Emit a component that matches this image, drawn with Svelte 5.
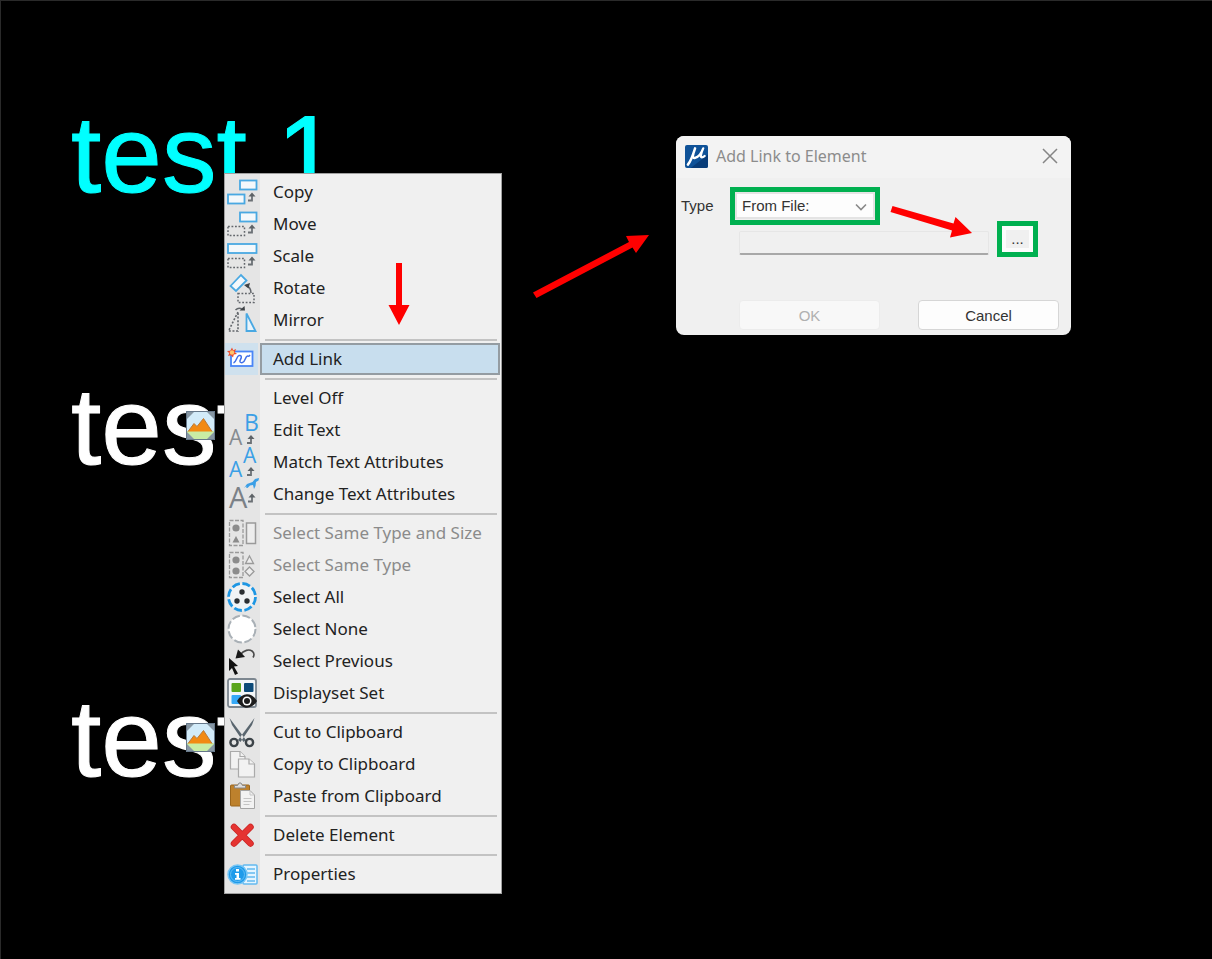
<!-- Drawing view with the element context menu and the link dialog. -->

<script>
	let linkType = 'file';
	let path = '';

	const notes = [
		{ text: 'test 1', cls: 'first' },
		{ text: 'test', cls: 'second', linked: true },
		{ text: 'test', cls: 'third', linked: true }
	];

	const groups = [
		[
			{ icon: 'copy', label: 'Copy' },
			{ icon: 'move', label: 'Move' },
			{ icon: 'scale', label: 'Scale' },
			{ icon: 'rotate', label: 'Rotate' },
			{ icon: 'mirror', label: 'Mirror' }
		],
		[{ icon: 'link', label: 'Add Link', active: true }],
		[
			{ icon: '', label: 'Level Off' },
			{ icon: 'edit', label: 'Edit Text' },
			{ icon: 'match', label: 'Match Text Attributes' },
			{ icon: 'change', label: 'Change Text Attributes' }
		],
		[
			{ icon: 'samesize', label: 'Select Same Type and Size', disabled: true },
			{ icon: 'sametype', label: 'Select Same Type', disabled: true },
			{ icon: 'all', label: 'Select All' },
			{ icon: 'none', label: 'Select None' },
			{ icon: 'previous', label: 'Select Previous' },
			{ icon: 'display', label: 'Displayset Set' }
		],
		[
			{ icon: 'cut', label: 'Cut to Clipboard' },
			{ icon: 'pages', label: 'Copy to Clipboard' },
			{ icon: 'paste', label: 'Paste from Clipboard' }
		],
		[{ icon: 'delete', label: 'Delete Element' }],
		[{ icon: 'props', label: 'Properties' }]
	];
</script>

{#snippet turn(x, y)}
	<path d="M{x} {y}h4v-5" fill="none" stroke="#6b7075" stroke-width="1.8" />
	<path d="M{x + 0.5} {y - 4}l3.5-4 3.5 4z" fill="#5d6266" />
{/snippet}

{#snippet icon(name)}
	<svg class="icon" viewBox="0 0 32 32" aria-hidden="true">
		{#if name === 'copy'}
			<g fill="#f4f8fb" stroke="#49a8e2" stroke-width="1.8">
				<rect x="14" y="4.5" width="16.5" height="9" />
				<rect x="2" y="18.5" width="16.5" height="9" />
			</g>
			{@render turn(22, 24.5)}
		{:else if name === 'move'}
			<rect x="14" y="4.5" width="16.5" height="9" fill="#f4f8fb" stroke="#49a8e2" stroke-width="1.8" />
			<rect x="2" y="18.5" width="16.5" height="9" fill="none" stroke="#62666b" stroke-width="1.5" stroke-dasharray="1.8 1.7" />
			{@render turn(22, 24.5)}
		{:else if name === 'scale'}
			<rect x="2" y="4" width="28.5" height="9" fill="#f4f8fb" stroke="#49a8e2" stroke-width="1.8" />
			<rect x="2" y="18.5" width="16.5" height="9" fill="none" stroke="#62666b" stroke-width="1.5" stroke-dasharray="1.8 1.7" />
			{@render turn(22, 24.5)}
		{:else if name === 'rotate'}
			<path d="M4.5 14L15 3l5.5 5.5L10 19z" fill="#f4f8fb" stroke="#49a8e2" stroke-width="1.8" />
			<path d="M20 13.5c3 1 5 4 5 7.5" fill="none" stroke="#62666b" stroke-width="1.5" />
			<path d="M18 13l6-2-1.5 5.5z" fill="#3f4347" />
			<rect x="12" y="21.5" width="16" height="9" fill="none" stroke="#62666b" stroke-width="1.5" stroke-dasharray="1.8 1.7" />
		{:else if name === 'mirror'}
			<path d="M12 8L2.5 27H12z" fill="none" stroke="#62666b" stroke-width="1.6" stroke-dasharray="2 1.6" />
			<path d="M20.5 9.5V27h9z" fill="#eaf4fb" stroke="#49a8e2" stroke-width="1.8" />
			<path d="M9.5 6c2-2 5-2 7-.5" fill="none" stroke="#62666b" stroke-width="1.5" />
			<path d="M13.5 6.5H19L18.5 2z" fill="#3f4347" />
		{:else if name === 'link'}
			<rect x="5" y="8.5" width="21.5" height="14.5" fill="#fff" stroke="#4a86f7" stroke-width="1.8" />
			<path d="M7.5 20c3-1 3-7 5.500-7.500s3 1.500 1.500 4 0 3.500 2 3c3-.5 2.500-6 5-6.500 1 0 1 1 2.500-1" fill="none" stroke="#3f6fe8" stroke-width="1.5" />
			<path d="M6 4.5l1.200 2.800 3-1.300-1.500 3 2.300 2-3.200.5-.8 3-2-2.300-3 .8 1.300-2.800-2.300-2.200 3.300-.3z" fill="#ee4b2b" />
			<circle cx="6" cy="9.5" r="2.200" fill="#ffc46b" />
		{:else if name === 'edit'}
			<text x="18" y="17" font-size="23" fill="#3b9fe6">B</text>
			<text x="3" y="31" font-size="21" fill="#858b91">A</text>
			{@render turn(21, 29)}
		{:else if name === 'match'}
			<text x="17" y="17" font-size="21" fill="#3b9fe6">A</text>
			<text x="3" y="31" font-size="21" fill="#3b9fe6">A</text>
			{@render turn(21, 29)}
		{:else if name === 'change'}
			<text x="3" y="30" font-size="29" fill="#7b8187">A</text>
			<path d="M18 10l3-4 5.5-2L29 1l4-1-.5 2.5L30 4l-.5 4L28 11l-1-4-3 .5-2.5 2.500L20 9.500l.5-1.500z" fill="#3b9fe6" />
			{@render turn(22, 23.5)}
		{:else if name === 'samesize'}
			<rect x="3.5" y="3.5" width="13.5" height="25" fill="none" stroke="#9a9a9a" stroke-width="1.3" stroke-dasharray="4 1.5" />
			<circle cx="10" cy="11" r="3.6" fill="#8c8c8c" />
			<path d="M10 19l3.5 6.5h-7z" fill="#8c8c8c" />
			<rect x="20.5" y="6" width="9" height="20.5" fill="#ededed" stroke="#9a9a9a" stroke-width="1.5" />
		{:else if name === 'sametype'}
			<rect x="3.5" y="3.5" width="13.5" height="25" fill="none" stroke="#9a9a9a" stroke-width="1.3" stroke-dasharray="4 1.5" />
			<circle cx="10" cy="11" r="3.6" fill="#8c8c8c" />
			<circle cx="10" cy="22" r="3.6" fill="#8c8c8c" />
			<path d="M23.5 7l4 7.5h-8zM23.5 18l4.5 4.5-4.5 4.5-4.5-4.5z" fill="#ededed" stroke="#9a9a9a" stroke-width="1.3" />
		{:else if name === 'all'}
			<circle cx="16" cy="16" r="13.5" fill="#f0f3f5" stroke="#1d96e3" stroke-width="2.8" stroke-dasharray="8 2.6" />
			<g fill="#2b2f33">
				<circle cx="16" cy="11" r="2.7" />
				<circle cx="11" cy="20" r="2.7" />
				<circle cx="21" cy="20" r="2.7" />
			</g>
		{:else if name === 'none'}
			<circle cx="16" cy="16" r="13.5" fill="#fff" stroke="#a9b0b6" stroke-width="2" stroke-dasharray="8 2.6" />
		{:else if name === 'previous'}
			<path d="M14 10c4-5 9-6 12-4 2 1.500 2.500 4 1 6.500" fill="none" stroke="#4a4a4a" stroke-width="1.6" />
			<path d="M9.5 13.500l2.500-9 3 3 4 4.500z" fill="#1a1a1a" />
			<path d="M3 13l9 8-4 .5 4 7-3 1.500-3-7L3 26z" fill="#111" />
		{:else if name === 'display'}
			<rect x="2" y="2" width="28" height="28" rx="2" fill="#f3f6f8" stroke="#7d8790" stroke-width="1.8" />
			<rect x="5.5" y="6" width="9.5" height="9" rx="1" fill="#59a51c" />
			<rect x="18" y="6" width="9.5" height="9" rx="1" fill="#0c4a78" />
			<rect x="5.5" y="18" width="9.5" height="9" rx="1" fill="#36a9f7" />
			<path d="M11 24c5-9 15-9 20 0-5 9-15 9-20 0z" fill="#1c1c1c" />
			<circle cx="21" cy="24" r="4.5" fill="#fff" />
			<circle cx="21" cy="24" r="3" fill="#1c1c1c" />
		{:else if name === 'cut'}
			<path d="M3.5 2L20 24l-2.500 2L6 9zM28.5 2L12 24l2.500 2L26 9z" fill="#59656e" />
			<g fill="none" stroke="#3c4348" stroke-width="2.4">
				<circle cx="8" cy="26.5" r="3.6" />
				<circle cx="23.5" cy="26.5" r="3.6" />
			</g>
		{:else if name === 'pages'}
			<g fill="#f2f2f2" stroke="#aaa" stroke-width="1.2">
				<path d="M4.5 3.5H14l5 5V21H4.5z" />
				<path d="M14 3.5v5h5" />
				<path d="M12.5 11H23l5.5 5v13h-16z" />
				<path d="M23 11v5h5.5" />
			</g>
		{:else if name === 'paste'}
			<rect x="4.5" y="5" width="19" height="21" rx="1" fill="#bd812d" stroke="#9a651c" />
			<path d="M8.5 8V5.5h3L13 3h2l1.5 2.5h3V8z" fill="#ddd" stroke="#888" />
			<path d="M14.5 10.5H24l4.500 4.5v13.500h-14z" fill="#f2f2f2" stroke="#a5a5a5" />
			<path d="M24 10.5V15h4.5M17.5 18.5h8M17.5 21.5h8M17.5 24.5h6" fill="none" stroke="#c4c4c4" />
		{:else if name === 'delete'}
			<path d="M8 8l16.5 16.5M24.5 8L8 24.5" stroke="#c92424" stroke-width="6.5" stroke-linecap="round" />
			<path d="M8 8l16.5 16.5M24.5 8L8 24.5" stroke="#e53431" stroke-width="5" stroke-linecap="round" />
		{:else if name === 'props'}
			<rect x="17" y="7" width="14" height="19" rx="1" fill="#e5f5ff" stroke="#63b9ef" stroke-width="1.5" />
			<path d="M21 11h8M21 15h8M21 19h8M21 23h8" stroke="#63b9ef" stroke-width="1.7" />
			<circle cx="11.5" cy="16.5" r="9.5" fill="#1f9bea" stroke="#77c6f5" stroke-width="1.5" />
			<circle cx="11.5" cy="16.5" r="7" fill="none" stroke="#62bdf5" />
			<path d="M10 11h3v2.500h-3zM9 15h4v5h1.500v1.800H9V20h1.500v-3.200H9z" fill="#fff" />
		{/if}
	</svg>
{/snippet}

<main>
	{#each notes as note}
		<div class="note {note.cls}">
			{note.text}
			{#if note.linked}
				<svg class="badge" viewBox="0 0 29 29" aria-hidden="true">
					<rect width="29" height="29" fill="#8696a3" />
					<path d="M8 1h13l7 7v12H1V8z" fill="#d2ebf9" />
					<path d="M1 20h27v1l-7 7H8l-7-7z" fill="#c9eda5" />
					<path d="M2 20.5l6-8 3 3 6.500-8 8.500 13z" fill="#f28a13" />
					<path d="M2 20.5l6-8 3 3 6.500-8 8.500 13" fill="none" stroke="#b97a3a" />
					<path d="M.5.5h28v28H.5z" fill="none" stroke="#66788a" />
				</svg>
			{/if}
		</div>
	{/each}

	<nav class="menu" aria-label="Element menu">
		{#each groups as group}
			<ul>
				{#each group as item}
					<li>
						<button class="item" class:active={item.active} disabled={item.disabled}>
							<span class="gutter">{@render icon(item.icon)}</span>
							<span class="label">{item.label}</span>
						</button>
					</li>
				{/each}
			</ul>
		{/each}
	</nav>

	<form class="dialog" on:submit|preventDefault>
		<header>
			<svg class="logo" viewBox="0 0 24 24" aria-hidden="true">
				<rect width="24" height="24" rx="2" fill="#0f5298" />
				<path d="M24 10v12a2 2 0 0 1-2 2H6z" fill="#083c78" />
				<path d="M10.5 3.500C8.500 10 6 17 3 20.500" fill="none" stroke="#fff" stroke-width="2.600" stroke-linecap="round" />
				<path d="M8.500 10c-.5 3 .5 4 2 3.500C14 12.500 17 9 19 3.500c-2 4.500-3.500 9.500-1.500 9.500 1.200 0 2-.5 3-1.500" fill="none" stroke="#fff" stroke-width="2.400" stroke-linecap="round" stroke-linejoin="round" />
			</svg>
			<h1>Add Link to Element</h1>
			<button class="close" type="button" aria-label="Close">
				<svg viewBox="0 0 16 16"><path d="M1 1l14 14M15 1L1 15" fill="none" stroke="#858585" stroke-width="1.5" /></svg>
			</button>
		</header>
		<div class="row">
			<label for="type">Type</label>
			<div class="picker">
				<select id="type" bind:value={linkType}>
					<option value="file">From File:</option>
				</select>
				<svg viewBox="0 0 12 8" aria-hidden="true"><path d="M1 1.5l5 5 5-5" fill="none" stroke="#8a8a8a" stroke-width="1.6" /></svg>
			</div>
		</div>
		<div class="row path">
			<input type="text" aria-label="Link path" bind:value={path} />
			<button class="browse" type="button">...</button>
		</div>
		<div class="row actions">
			<button type="submit" disabled>OK</button>
			<button type="button">Cancel</button>
		</div>
	</form>

	<!-- walkthrough arrows -->
	<svg class="arrows" aria-hidden="true">
		<g fill="#f00">
			<path d="M396 263h6v42h7.500L399 325l-10.500-20h7.500z" />
			<path d="M533 292.500L629 242l-3-6 23-1-13 18-3.500-5.500L536.500 298z" />
			<path d="M892.500 206L953.500 223.500l2-6.500L972 233l-22 4.500 2-7L890.500 212z" />
		</g>
	</svg>
</main>

<style>
	:global(body) {
		background: #000;
	}

	main {
		position: relative;
		min-height: 100vh;
		overflow: hidden;
		box-sizing: border-box;
		border-top: 1px solid #2a2a2a;
		border-left: 1px solid #2a2a2a;
		background: #000;
		font-family: "Noto Sans", sans-serif;
	}

	button,
	input,
	select {
		margin: 0;
		padding: 0;
		box-sizing: border-box;
		font: inherit;
		color: inherit;
	}

	svg {
		display: block;
	}

	.note {
		position: absolute;
		left: 70px;
		font: 109px/110px "Liberation Sans", sans-serif;
		white-space: nowrap;
		color: #fff;
		-webkit-text-stroke: 1px currentColor;
	}

	.first {
		top: 98px;
		color: #0ff;
	}

	.second {
		top: 370px;
	}

	.third {
		top: 682px;
	}

	.badge {
		position: absolute;
		left: 115px;
		top: 40px;
		width: 29px;
		height: 29px;
	}

	.menu {
		position: absolute;
		left: 223px;
		top: 172px;
		width: 278px;
		box-sizing: border-box;
		padding: 2px 0 3px;
		border: 1px solid #a0a0a0;
		background: linear-gradient(to right, #e5e5e5 35px, #f0f0f0 35px);
		font-size: 17px;
		color: #222;
	}

	ul {
		margin: 0;
		padding: 0;
		list-style: none;
	}

	ul + ul::before {
		content: '';
		display: block;
		height: 2px;
		margin: 3px 4px 2px 40px;
		background: #c3c3c3;
	}

	.item {
		display: flex;
		width: 100%;
		height: 32px;
		border: 0;
		background: none;
		text-align: left;
	}

	.gutter {
		flex: none;
		width: 33px;
		margin-right: 2px;
		padding-left: 1px;
		box-sizing: border-box;
	}

	.icon {
		width: 32px;
		height: 32px;
		overflow: visible;
		font-family: "Open Sans", sans-serif;
	}

	.label {
		flex: 1;
		box-sizing: border-box;
		height: 32px;
		padding-left: 11px;
		border: 2px solid transparent;
		line-height: 28px;
	}

	.active .gutter {
		background: #cfe1ee;
	}

	.active .label {
		margin-right: 1px;
		border-color: #949ca2;
		background: #c8deee;
	}

	.item:disabled {
		color: #8b8b8b;
	}

	.dialog {
		position: absolute;
		left: 675px;
		top: 135px;
		width: 395px;
		box-sizing: border-box;
		padding-bottom: 5px;
		border-radius: 8px;
		overflow: hidden;
		background: #f0f0f0;
		font: 15px "Liberation Sans", sans-serif;
		color: #333;
	}

	header {
		display: flex;
		align-items: center;
		height: 42px;
		padding: 0 13px 2px 9px;
		box-sizing: border-box;
		background: #f3f3f3;
	}

	.logo {
		width: 23px;
		height: 23px;
	}

	h1 {
		flex: 1;
		margin: 0 0 0 8px;
		font: 16px "Noto Sans", sans-serif;
		color: #8c8c8c;
	}

	.close {
		width: 16px;
		border: 0;
		background: none;
	}

	.row {
		display: flex;
		padding: 0 12px 0 5px;
	}

	.row:nth-child(2) {
		padding-top: 14px;
	}

	label {
		width: 54px;
		line-height: 28px;
	}

	.picker {
		position: relative;
		width: 140px;
		outline: 5px solid #00b050;
	}

	.picker svg {
		position: absolute;
		right: 8px;
		top: 11px;
		width: 12px;
		height: 8px;
		pointer-events: none;
	}

	select {
		display: block;
		width: 100%;
		height: 27px;
		padding-left: 5px;
		border: 2px solid #e4e4e4;
		appearance: none;
		background: #fdfdfd;
	}

	.path {
		padding-top: 6px;
		padding-left: 63px;
		gap: 13px;
	}

	input {
		width: 250px;
		height: 24px;
		margin-top: 5px;
		border: 1px solid #e6e6e6;
		border-bottom: 2px solid #a8a8a8;
		border-radius: 2px;
		background: #f0f0f0;
	}

	.browse {
		width: 31px;
		height: 26px;
		border: 4px solid #fcfcfc;
		outline: 5px solid #00b050;
		background: #f0f0f0;
		line-height: 18px;
	}

	.actions {
		padding-top: 45px;
		padding-left: 63px;
		justify-content: space-between;
	}

	.actions button {
		width: 141px;
		height: 30px;
		border: 1px solid #d6d6d6;
		border-radius: 4px;
		background: #fdfdfd;
	}

	.actions button:disabled {
		border-color: #ececec;
		background: #f8f8f8;
		color: #b0b0b0;
	}

	.arrows {
		position: absolute;
		left: -1px;
		top: -1px;
		width: 100%;
		height: 100%;
		overflow: visible;
		pointer-events: none;
	}
</style>
